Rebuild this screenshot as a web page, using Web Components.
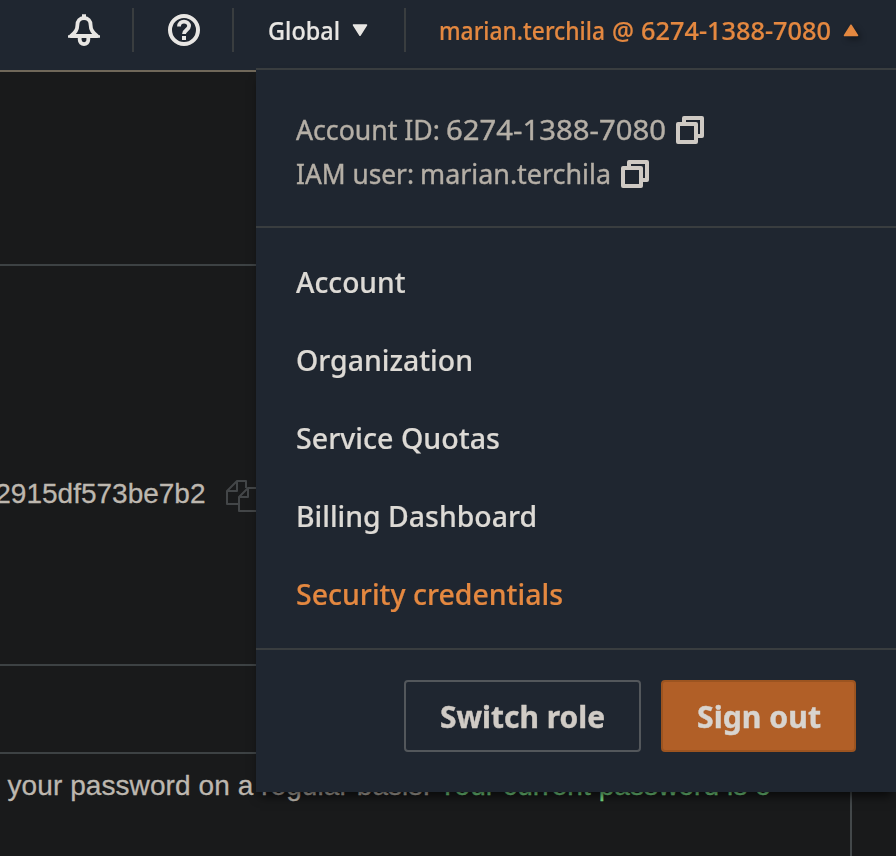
<!DOCTYPE html>
<html lang="en">
<head>
<meta charset="utf-8">
<title>Security credentials</title>
<style>
html,body{margin:0;height:100%;overflow:hidden;background:#191a1b}
body{font-family:"Noto Sans","Open Sans",sans-serif}
</style>
</head>
<body>
<console-page></console-page>
<script>
/* Text squeezed or stretched horizontally to an exact width. */
class FitText extends HTMLElement {
  constructor() {
    super();
    this.attachShadow({mode: 'open'}).innerHTML = `<style>
      :host{display:block;flex:none;white-space:nowrap}
      span{display:inline-block;transform-origin:0 50%;white-space:pre}
    </style><span><slot></slot></span>`;
  }
  connectedCallback() {
    const w = +this.getAttribute('width');
    const span = this.shadowRoot.querySelector('span');
    this.style.width = w + 'px';
    span.style.transform = `scaleX(${w / span.getBoundingClientRect().width})`;
  }
}

const ICONS = {
  bell: [32, 32, `<g fill="none" stroke="#e8e6e3" stroke-width="3.800" stroke-linejoin="round"><path d="M16 4c-4.200 0-6.600 3-6.600 7 0 5.200-2.400 7.500-6.400 11h26c-4-3.500-6.400-5.800-6.400-11 0-4-2.400-7-6.600-7z"/><path d="M11.700 23v2.800a4.300 4.300 0 0 0 8.600 0V23"/></g><path d="M14 0.300h4v4h-4zM0 21.300h32v2.500H0z" fill="#e8e6e3"/>`],
  help: [32, 32, `<circle cx="16" cy="16" r="14" fill="none" stroke="#e8e6e3" stroke-width="4"/><path d="M11 12.600c0-3.200 2-4.900 5-4.900s5.100 1.700 5.100 4.400c0 3.900-5.100 3.700-5.100 8" fill="none" stroke="#e8e6e3" stroke-width="3.800"/><path d="M14 22h4v4h-4z" fill="#e8e6e3"/>`],
  down: [16, 13, `<path d="M1.500 1h13L8 11.300z" fill="#e8e6e3" stroke="#e8e6e3" stroke-width="1.500" stroke-linejoin="round"/>`],
  up: [16, 13, `<path d="M1.500 11.500h13L8 1.200z" fill="#e48840" stroke="#e48840" stroke-width="1.500" stroke-linejoin="round"/>`],
  copy: [28, 28, `<g fill="none" stroke="#cfcac4" stroke-width="4" stroke-linejoin="round"><path d="M2 8h18v18H2z"/><path d="M8 8V2h18v18h-6"/></g>`],
  clone: [32, 32, `<g fill="none" stroke="#434648" stroke-width="2" stroke-linejoin="round"><path d="M12.500 24H1V11L11 1h9v7"/><path d="M1 11h10V1"/><path d="M13 17v14h18V8h-9z"/><path d="M13 17h9V8"/></g>`]
};
class UiIcon extends HTMLElement {
  constructor() {
    super();
    const [w, h, body] = ICONS[this.getAttribute('name')] || [0, 0, ''];
    this.attachShadow({mode: 'open'}).innerHTML =
      `<style>:host{display:block;flex:none}svg{display:block;overflow:visible}</style><svg width="${w}" height="${h}" viewBox="0 0 ${w} ${h}">${body}</svg>`;
  }
}

class TopNav extends HTMLElement {
  constructor() {
    super();
    this.attachShadow({mode: 'open'}).innerHTML = `<style>
      :host{display:flex;box-sizing:border-box;height:72px;padding:8px 0 18px 68px;background:#1f2630;border-bottom:2px solid #70685a;font-size:25px;font-weight:500;line-height:44px;color:#e8e6e3;-webkit-text-stroke:.2px}
      div{display:flex;align-items:center;box-sizing:border-box;height:44px;border-right:2px solid #393d3f}
      .bell{width:66px}.help{width:100px;padding-left:34px}
      .region{width:172px;padding-left:34px;gap:12px}
      .user{border:0;padding-left:33px;gap:7px;color:#e48840}
      .user ui-icon{margin-left:5px;filter:drop-shadow(3px 3px 3px #0006)}
    </style>
    <div class="bell"><ui-icon name="bell"></ui-icon></div>
    <div class="help"><ui-icon name="help"></ui-icon></div>
    <div class="region"><fit-text width="72">Global</fit-text><ui-icon name="down"></ui-icon></div>
    <div class="user"><fit-text width="166">marian.terchila</fit-text><fit-text width="22">@</fit-text><fit-text width="190">6274-1388-7080</fit-text><ui-icon name="up"></ui-icon></div>`;
  }
}

class MenuItem extends HTMLElement {
  constructor() {
    super();
    this.attachShadow({mode: 'open'}).innerHTML = `<style>
      :host{display:flex;align-items:center;height:78px;color:#dddad5;font-size:29px;font-weight:500;-webkit-text-stroke:.2px}
      :host([active]){color:#e48840}
    </style><slot></slot>`;
  }
}

class UiButton extends HTMLElement {
  constructor() {
    super();
    this.attachShadow({mode: 'open'}).innerHTML = `<style>
      :host{display:flex;align-items:center;justify-content:center;box-sizing:border-box;height:72px;border:2px solid #53575b;border-radius:4px;color:#d0cbc5;font-size:30px;font-weight:700;-webkit-text-stroke:.4px}
      :host([primary]){background:#b15f27;border-color:#9c5420;color:#d8d4cf}
    </style><slot></slot>`;
  }
}

class AccountMenu extends HTMLElement {
  constructor() {
    super();
    this.attachShadow({mode: 'open'}).innerHTML = `<style>
      :host{display:block;box-sizing:border-box;height:724px;background:#1f2630;border-top:2px solid #393d3f;box-shadow:0 8px 10px -4px #000a}
      section{box-sizing:border-box;border-bottom:2px solid #393d3f}
      .ids{height:158px;padding:38px 40px 0;color:#b5afa6;font-size:27.500px;font-weight:400;-webkit-text-stroke:.4px}
      .row{display:flex;align-items:center;height:44px;gap:6px}
      .row fit-text{padding-bottom:2px}
      .row ui-icon{margin-left:4px}
      .items{height:422px;padding:14px 40px 0}
      .actions{display:flex;justify-content:flex-end;gap:20px;padding:30px 40px 0}
      .switch{width:237px}.out{width:195px}
    </style>
    <section class="ids">
      <div class="row"><fit-text width="144">Account ID:</fit-text><fit-text width="220">6274-1388-7080</fit-text><ui-icon name="copy"></ui-icon></div>
      <div class="row"><fit-text width="118">IAM user:</fit-text><fit-text width="191">marian.terchila</fit-text><ui-icon name="copy"></ui-icon></div>
    </section>
    <section class="items">
      <menu-item><fit-text width="109.500">Account</fit-text></menu-item>
      <menu-item><fit-text width="177">Organization</fit-text></menu-item>
      <menu-item><fit-text width="204">Service Quotas</fit-text></menu-item>
      <menu-item><fit-text width="241">Billing Dashboard</fit-text></menu-item>
      <menu-item active><fit-text width="267">Security credentials</fit-text></menu-item>
    </section>
    <div class="actions">
      <ui-button class="switch"><fit-text width="165">Switch role</fit-text></ui-button>
      <ui-button class="out" primary><fit-text width="124">Sign out</fit-text></ui-button>
    </div>`;
  }
}

class PageContent extends HTMLElement {
  constructor() {
    super();
    this.attachShadow({mode: 'open'}).innerHTML = `<style>
      :host{display:block;width:852px;box-sizing:border-box;height:784px;border-right:2px solid #43484a;font:28px/44px "Liberation Sans",sans-serif;color:#bdb7af;white-space:nowrap;-webkit-text-stroke:.3px}
      section{box-sizing:border-box;border-bottom:2px solid #3d4244}
      .a{height:194px}.c{height:88px}
      .b{height:400px;display:flex;align-items:flex-start;padding-top:206px;gap:20.500px}
      .hash{width:205.500px;display:flex;justify-content:flex-end}
      ui-icon{padding-top:8px}
      p{margin:0;padding:10px 0 0 7.500px;display:flex;gap:8px;letter-spacing:.08px}
      .ok{color:#7ee08c}
    </style>
    <section class="a"></section>
    <section class="b"><span class="hash">2915df573be7b2</span><ui-icon name="clone"></ui-icon></section>
    <section class="c"></section>
    <p><span>your password on a regular basis.</span><span class="ok">Your current password is o</span></p>`;
  }
}

class ConsolePage extends HTMLElement {
  constructor() {
    super();
    this.attachShadow({mode: 'open'}).innerHTML = `<style>
      :host{display:block;position:relative;width:896px;height:856px;overflow:hidden;background:#191a1b}
      account-menu{position:absolute;top:68px;right:0;width:640px}
    </style>
    <top-nav></top-nav><page-content></page-content><account-menu></account-menu>`;
  }
}

customElements.define('fit-text', FitText);
customElements.define('ui-icon', UiIcon);
customElements.define('menu-item', MenuItem);
customElements.define('ui-button', UiButton);
customElements.define('top-nav', TopNav);
customElements.define('account-menu', AccountMenu);
customElements.define('page-content', PageContent);
customElements.define('console-page', ConsolePage);
</script>
</body>
</html>
